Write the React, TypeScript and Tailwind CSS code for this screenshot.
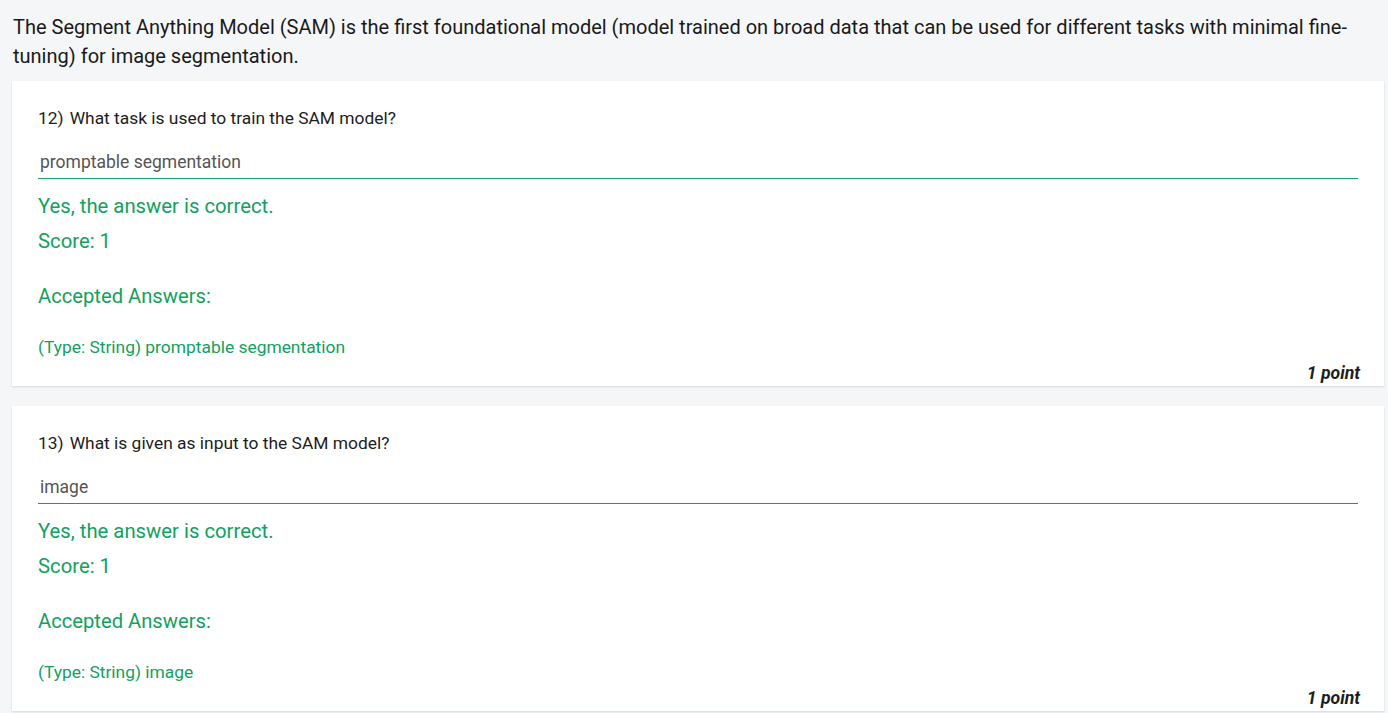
import React from "react";

const green = "text-[#12a15e]";

function Card({
  num,
  question,
  answer,
  accepted,
  lineColor,
}: {
  num: string;
  question: string;
  answer: string;
  accepted: string;
  lineColor: string;
}) {
  return (
    <div className="bg-white ml-[12px] mr-[4px] shadow-[0_1px_2px_rgba(0,0,0,0.12)] pl-[26px] pr-[26px]">
      <div className="pt-[25px] text-[17.4px] leading-[24px] text-[#1d1d1d]">
        <span>{num})</span>
        <span className="ml-[6px]">{question}</span>
      </div>
      <div className={`mt-[20px] h-[29px] border-b ${lineColor} pl-[2px] text-[17.5px] leading-[24px] text-[#555555]`}>
        {answer}
      </div>
      <div className={`mt-[13px] text-[20.3px] leading-[28px] ${green}`}>Yes, the answer is correct.</div>
      <div className={`mt-[7px] text-[20.3px] leading-[28px] ${green}`}>Score: 1</div>
      <div className={`mt-[27px] text-[20.2px] leading-[28px] ${green}`}>Accepted Answers:</div>
      <div className={`mt-[25px] text-[17.4px] leading-[24px] ${green}`}>{accepted}</div>
      <div className="mt-[4px] flex justify-end pb-[2px] text-[17.6px] leading-[21px] font-bold italic text-[#1d1d1d] -mr-[2px]">
        1 point
      </div>
    </div>
  );
}

export default function App() {
  return (
    <div
      className="w-[1388px] h-[713px] overflow-hidden bg-[#f5f6f8]"
      style={{ fontFamily: "Roboto, 'Noto Sans', sans-serif" }}
    >
      <p className="pl-[13px] pr-[30px] pt-[13px] text-[20px] leading-[29px] text-[#1a1a1a]">
        The Segment Anything Model (SAM) is the first foundational model (model trained on broad data that can be used for different tasks with minimal fine-tuning) for image segmentation.
      </p>
      <div className="mt-[10px] flex flex-col gap-[20px]">
        <Card
          num="12"
          question="What task is used to train the SAM model?"
          answer="promptable segmentation"
          accepted="(Type: String) promptable segmentation"
          lineColor="border-[#14a862]"
        />
        <Card
          num="13"
          question="What is given as input to the SAM model?"
          answer="image"
          accepted="(Type: String) image"
          lineColor="border-[#1f9a5c]"
        />
      </div>
    </div>
  );
}
